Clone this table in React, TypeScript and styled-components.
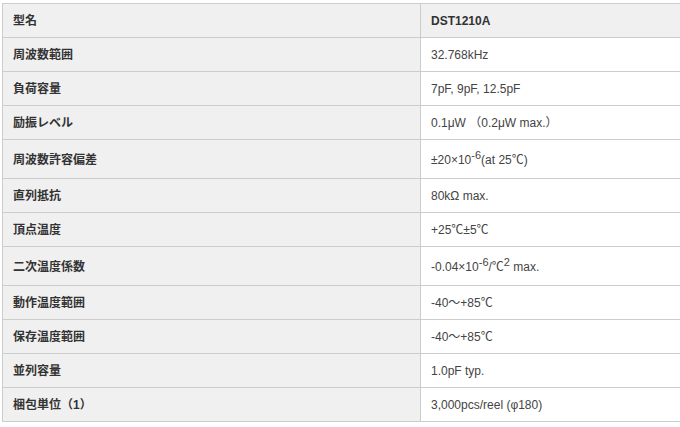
import React from "react";
import styled, { createGlobalStyle } from "styled-components";

const Global = createGlobalStyle`
  html, body { margin: 0; padding: 0; overflow: hidden; background: #fff; }
  body { font-family: "Liberation Sans", Arial, "Noto Sans CJK JP", sans-serif; }
`;

const Wrap = styled.div`
  padding: 3px 0 0 2px;
`;

const Table = styled.table`
  border-collapse: collapse;
  width: 690px;
  table-layout: fixed;
  font-size: 12px;
  line-height: 14px;
`;

const Row = styled.tr``;

const Label = styled.th`
  width: 397px;
  text-align: left;
  font-weight: bold;
  color: #333;
  background: #f0f0f0;
  border: 1px solid #cccccc;
  padding: 10px 10px 9px 10px;
  font-family: "Liberation Sans", "Noto Sans CJK JP", sans-serif;
`;

const Value = styled.td<{ $head?: boolean }>`
  text-align: left;
  color: ${(p) => (p.$head ? "#333" : "#444")};
  font-weight: ${(p) => (p.$head ? "bold" : "normal")};
  background: ${(p) => (p.$head ? "#f0f0f0" : "#fff")};
  border: 1px solid #cccccc;
  padding: 10px 10px 9px 10px;
  font-family: "Liberation Sans", "Noto Sans CJK JP", sans-serif;
`;

const Sup = styled.sup`
  font-size: 11px;
  line-height: 0;
  vertical-align: 5px;
`;

const rows: [string, React.ReactNode][] = [
  ["周波数範囲", "32.768kHz"],
  ["負荷容量", "7pF, 9pF, 12.5pF"],
  ["励振レベル", "0.1μW （0.2μW max.）"],
  [
    "周波数許容偏差",
    <>
      ±20×10<Sup>-6</Sup>(at 25℃)
    </>,
  ],
  ["直列抵抗", "80kΩ max."],
  ["頂点温度", "+25℃±5℃"],
  [
    "二次温度係数",
    <>
      -0.04×10<Sup>-6</Sup>/℃<Sup>2</Sup> max.
    </>,
  ],
  ["動作温度範囲", "-40～+85℃"],
  ["保存温度範囲", "-40～+85℃"],
  ["並列容量", "1.0pF typ."],
  ["梱包単位（1）", "3,000pcs/reel (φ180)"],
];

const SupRowValue = styled(Value)`
  padding-top: 13px;
  padding-bottom: 11px;
`;

export default function App() {
  return (
    <>
      <Global />
      <Wrap>
        <Table>
          <tbody>
            <Row>
              <Label>型名</Label>
              <Value $head>DST1210A</Value>
            </Row>
            {rows.map(([k, v], i) => {
              const hasSup = typeof v !== "string";
              const V = hasSup ? SupRowValue : Value;
              return (
                <Row key={i}>
                  <Label>{k}</Label>
                  <V>{v}</V>
                </Row>
              );
            })}
          </tbody>
        </Table>
      </Wrap>
    </>
  );
}
